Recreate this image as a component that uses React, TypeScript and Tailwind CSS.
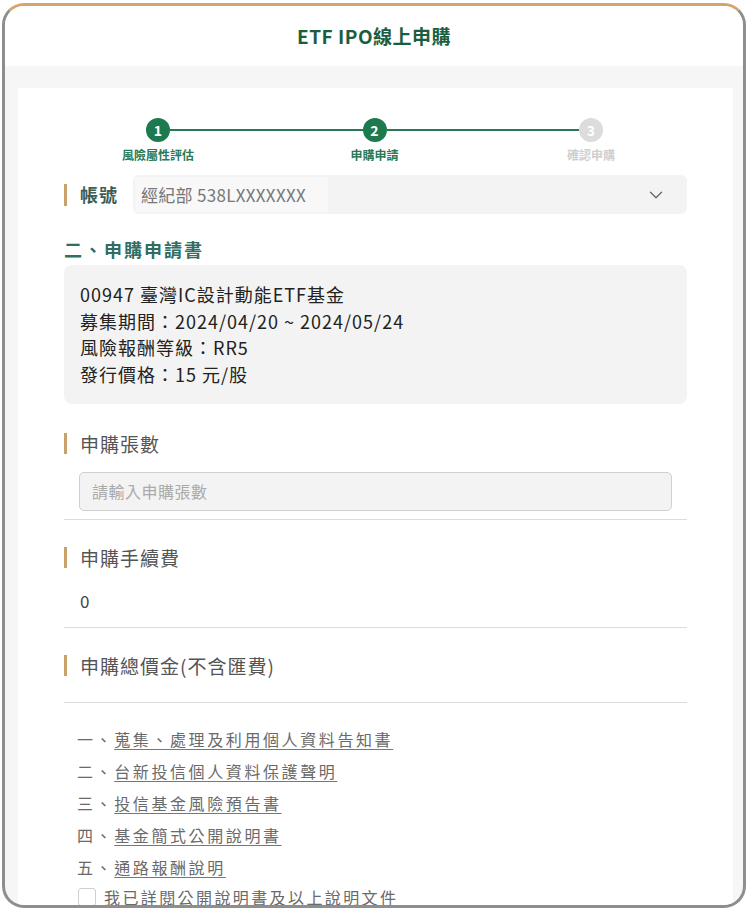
import { ChevronDown } from 'lucide-react';

const steps = [
    { n: 1, label: '風險屬性評估', done: true },
    { n: 2, label: '申購申請', done: true },
    { n: 3, label: '確認申購', done: false },
];

const docs = [
    { no: '一', title: '蒐集、處理及利用個人資料告知書' },
    { no: '二', title: '台新投信個人資料保護聲明' },
    { no: '三', title: '投信基金風險預告書' },
    { no: '四', title: '基金簡式公開說明書' },
    { no: '五', title: '通路報酬說明' },
];

function FieldLabel({ children }: { children: React.ReactNode }) {
    return (
        <div className="flex items-center h-[28px]">
            <span className="w-[3px] h-[21px] bg-[#c9a16a]" />
            <span className="ml-[13px] text-[19px] tracking-[1px] text-[#555] leading-[28px]">{children}</span>
        </div>
    );
}

export default function App() {
    return (
        <div className="w-[748px] h-[910px] bg-white pt-[3px] pl-[2px] font-['Noto_Sans_CJK_TC',sans-serif]">
            <div className="w-[744px] h-[905px] rounded-[22px] border-[3px] border-[#8e8e8e] border-t-[#d4a56a] overflow-hidden flex flex-col bg-[#f6f6f6]">
                {/* Header */}
                <header className="h-[60px] shrink-0 bg-white flex items-center justify-center">
                    <h1 className="text-[19px] font-bold text-[#1b5e3f] tracking-[0.5px]">ETF IPO線上申購</h1>
                </header>

                <div className="flex-1 min-h-0 pt-[22px] pl-[13px] pr-[10px]">
                    <div className="bg-white h-full px-[46px] pt-[30px]">
                        {/* Stepper */}
                        <div className="ml-[82px] mr-[84px] grid grid-cols-[24px_1fr_24px_1fr_24px] items-center">
                            {steps.map((s, i) => (
                                <>
                                    <div
                                        key={`c${s.n}`}
                                        className={`w-[24px] h-[24px] rounded-full flex items-center justify-center text-[14px] font-bold text-white ${s.done ? 'bg-[#1d7a4f]' : 'bg-[#dcdcdc]'}`}
                                    >
                                        {s.n}
                                    </div>
                                    {i < steps.length - 1 && <div key={`l${s.n}`} className="h-[2px] bg-[#28775a]" />}
                                </>
                            ))}
                            {steps.map((s, i) => (
                                <>
                                    <div key={`t${s.n}`} className="w-[24px] flex justify-center mt-[5px]">
                                        <span className={`whitespace-nowrap text-[12px] font-bold leading-[16px] ${s.done ? 'text-[#2b7a55]' : 'text-[#cfcfcf]'}`}>
                                            {s.label}
                                        </span>
                                    </div>
                                    {i < steps.length - 1 && <div key={`s${s.n}`} />}
                                </>
                            ))}
                        </div>

                        {/* Account */}
                        <div className="mt-[12px] flex items-center">
                            <span className="w-[3px] h-[22px] bg-[#c9a16a]" />
                            <span className="ml-[13px] w-[53px] text-[18px] font-bold tracking-[1px] text-[#3d5c53]">帳號</span>
                            <div className="flex-1 h-[39px] bg-[#f3f3f3] rounded-[6px] flex items-center justify-between pr-[20px]">
                                <div className="ml-[2px] w-[193px] h-[35px] bg-[#f8f8f8] flex items-center px-[6px]">
                                    <span className="text-[17px] text-[#777] whitespace-nowrap tracking-[0.3px]">經紀部 538LXXXXXXX</span>
                                </div>
                                <ChevronDown className="w-[22px] h-[22px] text-[#666]" strokeWidth={1.4} />
                            </div>
                        </div>

                        {/* Application */}
                        <h2 className="mt-[22px] text-[18px] leading-[26px] font-bold tracking-[2px] text-[#2f6e61]">二、申購申請書</h2>
                        <div className="mt-[3px] bg-[#f3f3f3] rounded-[8px] px-[16px] py-[16px] text-[18px] leading-[26.7px] text-[#222] tracking-[1px]">
                            <p>00947 臺灣IC設計動能ETF基金</p>
                            <p>募集期間：2024/04/20 ~ 2024/05/24</p>
                            <p>風險報酬等級：RR5</p>
                            <p>發行價格：15 元/股</p>
                        </div>

                        {/* Quantity */}
                        <div className="mt-[26px]">
                            <FieldLabel>申購張數</FieldLabel>
                        </div>
                        <div className="mt-[14px] mx-[15px] h-[39px] bg-[#f3f3f3] border border-[#cfcfcf] rounded-[5px] flex items-center px-[12px]">
                            <span className="text-[16px] text-[#aaa] tracking-[0.5px]">請輸入申購張數</span>
                        </div>
                        <div className="mt-[8px] h-px bg-[#dcdcdc]" />

                        {/* Fee */}
                        <div className="mt-[24px]">
                            <FieldLabel>申購手續費</FieldLabel>
                        </div>
                        <p className="mt-[16px] pl-[16px] text-[17px] leading-[26px] text-[#444]">0</p>
                        <div className="mt-[13px] h-px bg-[#dcdcdc]" />

                        {/* Total */}
                        <div className="mt-[24px]">
                            <FieldLabel>申購總價金(不含匯費)</FieldLabel>
                        </div>
                        <div className="mt-[22px] h-px bg-[#dcdcdc]" />

                        {/* Documents */}
                        <ul className="mt-[20px] pl-[13px] text-[16px] tracking-[2.6px] text-[#6a6a6a]">
                            {docs.map((d) => (
                                <li key={d.no} className="h-[32px] leading-[32px]">
                                    {d.no}、<span className="underline underline-offset-[3px] decoration-[#777]">{d.title}</span>
                                </li>
                            ))}
                        </ul>
                        <label className="pl-[14px] h-[28px] flex items-center">
                            <span className="w-[18px] h-[18px] border border-[#cfcfcf] rounded-[3px] bg-white" />
                            <span className="ml-[8px] text-[16px] tracking-[2.4px] text-[#6a6a6a]">我已詳閱公開說明書及以上說明文件</span>
                        </label>
                    </div>
                </div>
            </div>
        </div>
    );
}
